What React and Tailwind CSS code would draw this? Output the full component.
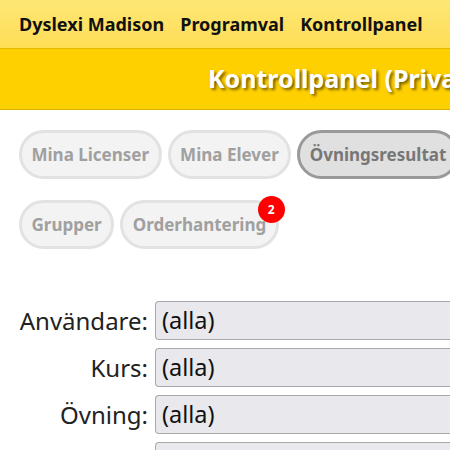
import React from "react";

const font = { fontFamily: '"Noto Sans", "Open Sans", sans-serif' };

function Pill({ children, active, badge }) {
  return (
    <div className="relative">
      <div
        className={
          active
            ? "h-[49px] rounded-full border-[3px] border-[#999999] bg-[#e0e0e0] px-[9.5px] flex items-center text-[17px] font-bold text-[#777777] whitespace-nowrap"
            : "h-[49px] rounded-full border-[3px] border-[#e2e2e2] bg-[#f3f3f3] px-[9.5px] flex items-center text-[17px] font-bold text-[#a0a0a0] whitespace-nowrap"
        }
      >
        {children}
      </div>
      {badge && (
        <div className="absolute -top-[4px] -right-[6px] w-[27px] h-[27px] rounded-full bg-[#ff0000] text-white text-[12px] font-bold flex items-center justify-center">
          {badge}
        </div>
      )}
    </div>
  );
}

function Field({ label }) {
  return (
    <div className="flex items-center">
      <div className="w-[155px] shrink-0 text-right pr-[7px] text-[24px] text-[#222222] whitespace-nowrap">{label}</div>
      <div className="flex-1 h-[39px] rounded-l-[4px] border border-r-0 border-[#a9a9a9] bg-[#e9e9ed] pl-[6px] flex items-center text-[23.5px] text-[#111111]">
        {label ? "(alla)" : ""}
      </div>
    </div>
  );
}

export default function App() {
  return (
    <div className="w-[450px] h-[450px] overflow-hidden bg-white" style={font}>
      <div className="h-[49px] bg-gradient-to-b from-[#fde775] to-[#ffdd55] border-b border-[#e3b800] flex items-center gap-[16px] pl-[19px] text-[18px] font-bold text-[#111111] whitespace-nowrap">
        <span>Dyslexi Madison</span>
        <span>Programval</span>
        <span>Kontrollpanel</span>
      </div>
      <div className="h-[61px] bg-[#ffd000] border-b border-[#d9b000] flex items-center pl-[208px] overflow-hidden">
        <span className="text-[25px] font-bold text-white whitespace-nowrap [text-shadow:2px_2px_3px_rgba(0,0,0,0.55)]">
          Kontrollpanel (Privat)
        </span>
      </div>
      <div className="pl-[19px] pt-[20px] flex flex-col gap-[21px]">
        <div className="flex gap-[6px]">
          <Pill>Mina Licenser</Pill>
          <Pill>Mina Elever</Pill>
          <Pill active>Övningsresultat</Pill>
        </div>
        <div className="flex gap-[6px]">
          <Pill>Grupper</Pill>
          <Pill badge="2">Orderhantering</Pill>
        </div>
      </div>
      <div className="mt-[52px] flex flex-col gap-[8px]">
        <Field label="Användare:" />
        <Field label="Kurs:" />
        <Field label="Övning:" />
        <Field label="" />
      </div>
    </div>
  );
}
